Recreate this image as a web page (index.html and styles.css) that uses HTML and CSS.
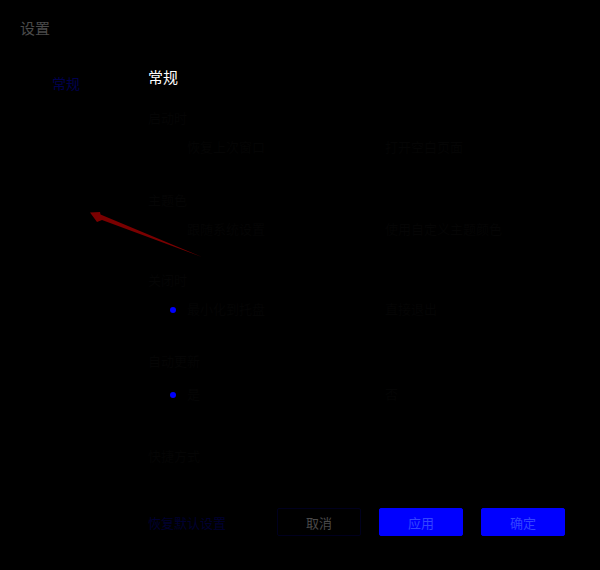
FILE: index.html
```html
<!DOCTYPE html>
<html lang="zh-CN">
  <head>
    <meta charset="UTF-8" />
    <meta name="viewport" content="width=device-width, initial-scale=1.0" />
    <title>设置</title>
    <link rel="stylesheet" href="styles.css">
  </head>
  <body>
    <div class="dialog">
      <header class="dialog_title">设置</header>
      <div class="dialog_body">
        <nav class="side">
          <a class="side_item">常规</a>
        </nav>
        <main class="content">
          <h1>常规</h1>

          <section class="group start">
            <h2>启动时</h2>
            <div class="options">
              <label class="option"><span class="radio"></span>恢复上次窗口</label>
              <label class="option"><span class="radio"></span>打开空白页面</label>
            </div>
          </section>

          <section class="group theme">
            <h2>主题色</h2>
            <div class="options">
              <label class="option"><span class="radio"></span>跟随系统设置</label>
              <label class="option"><span class="radio"></span>使用自定义主题颜色</label>
            </div>
          </section>

          <section class="group close">
            <h2>关闭时</h2>
            <div class="options">
              <label class="option"><span class="radio on"></span>最小化到托盘</label>
              <label class="option"><span class="radio"></span>直接退出</label>
            </div>
          </section>

          <section class="group update">
            <h2>自动更新</h2>
            <div class="options">
              <label class="option"><span class="radio on"></span>是</label>
              <label class="option"><span class="radio"></span>否</label>
            </div>
          </section>

          <section class="group">
            <h2>快捷方式</h2>
          </section>
        </main>
      </div>
      <footer class="dialog_foot">
        <a class="reset">恢复默认设置</a>
        <button class="btn">取消</button>
        <button class="btn primary">应用</button>
        <button class="btn primary">确定</button>
      </footer>

      <!-- red arrow drawn over the page -->
      <svg class="arrow" width="120" height="50" viewBox="0 0 120 50">
        <polygon points="0,1.5 10,1 10.5,3.5 112,46 12,9 7,11" fill="#7a0000" />
      </svg>
    </div>
  </body>
</html>
```

FILE: styles.css
```css
html,
body {
  margin: 0;
  background-color: #000;
}
body {
  font-family: "Liberation Sans", "Noto Sans CJK SC", sans-serif;
  font-size: 13px;
  color: #050505;
}
.dialog {
  position: relative;
  width: 600px;
  height: 570px;
  overflow: hidden;
  display: flex;
  flex-direction: column;
}
.dialog_title {
  flex-shrink: 0;
  padding: 19px 20px 0;
  height: 31px;
  line-height: 20px;
  font-size: 15px;
  color: #4a4a4a;
}
.dialog_body {
  flex: 1;
  min-height: 0;
  display: flex;
}
.side {
  width: 148px;
  padding: 24px 0 0 52px;
  box-sizing: border-box;
}
.side_item {
  font-size: 14px;
  line-height: 20px;
  color: #00004e;
}
.content {
  flex: 1;
  padding-top: 18px;
}
h1 {
  margin: 0 0 21px;
  font-size: 15px;
  line-height: 20px;
  font-weight: 400;
  color: #fff;
}
.group.start {
  height: 82px;
}
.group.theme {
  height: 80px;
}
.group.close {
  height: 81px;
}
.group.update {
  height: 95px;
}
.group h2 {
  margin: 0;
  font-size: 13px;
  line-height: 20px;
  font-weight: 400;
  color: #050505;
}
.options {
  display: grid;
  grid-template-columns: 198px 1fr;
  margin-top: 9px;
  padding-left: 20px;
}
.group.update .options {
  margin-top: 13px;
}
.option {
  display: flex;
  align-items: center;
  gap: 11px;
  line-height: 20px;
}
.radio {
  width: 6px;
  height: 6px;
  margin-left: 2px;
  border-radius: 50%;
}
.radio.on {
  background-color: #0000ff;
}
.dialog_foot {
  flex-shrink: 0;
  display: flex;
  align-items: center;
  gap: 18px;
  height: 28px;
  padding: 0 35px 34px 148px;
}
.reset {
  margin-right: auto;
  color: #000030;
}
.btn {
  -webkit-appearance: none;
  width: 84px;
  height: 28px;
  padding: 0;
  border: 1px solid #00001e;
  border-radius: 2px;
  background-color: #000;
  font-family: inherit;
  font-size: 13px;
  color: #4a4a4a;
}
.btn.primary {
  border-color: #0000ff;
  background-color: #0000ff;
  color: #3344ff;
}
.arrow {
  position: absolute;
  left: 90px;
  top: 211px;
}
```
